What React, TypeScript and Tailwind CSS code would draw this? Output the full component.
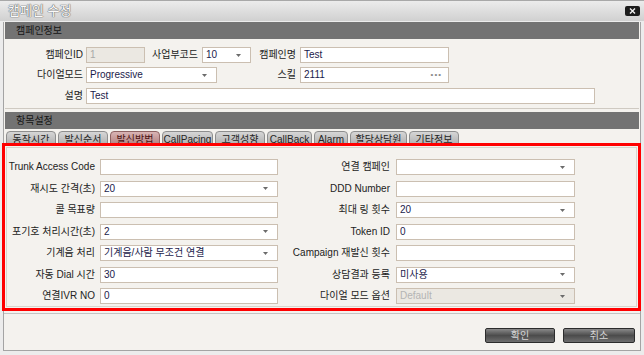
import React from 'react';

/**
 * CampaignEditDialog
 * ==================
 * 캠페인 수정 popup — campaign info form + 발신방법 tab.
 */

const TABS = ['동작시간', '발신순서', '발신방법', 'CallPacing', '고객성향', 'CallBack', 'Alarm', '할당상담원', '기타정보'];
const TAB_WIDTHS = ['w-[50px]', 'w-[50px]', 'w-[50px]', 'w-[51px]', 'w-[50px]', 'w-[45px]', 'w-[34px]', 'w-[57px]', 'w-[50px]'];

function Arrow() {
  return (
    <svg width="5" height="3" viewBox="0 0 5 3" className="shrink-0">
      <path d="M0 0h5L2.5 3z" fill="#6b6b6b" />
    </svg>
  );
}

function Input({ value, w, disabled, dots }: { value?: string; w: string; disabled?: boolean; dots?: boolean }) {
  return (
    <div
      className={`${w} h-[16px] flex items-center justify-between border border-[#cbbfb1] pl-[3px] pr-[6px] leading-[14px] ${
        disabled ? 'bg-[#ebe8e2] text-[#a8a8a8]' : 'bg-white text-[#1b1b4b]'
      }`}
    >
      <span>{value}</span>
      {dots && <span className="text-[#8a8a8a] text-[8px] tracking-[1px]">•••</span>}
    </div>
  );
}

function Select({ value, w, disabled }: { value?: string; w: string; disabled?: boolean }) {
  return (
    <div
      className={`${w} h-[16px] flex items-center justify-between border border-[#cbbfb1] pl-[3px] pr-[9px] leading-[14px] ${
        disabled ? 'bg-[#ebe8e2] text-[#b4b4b4]' : 'bg-white text-[#1b1b4b]'
      }`}
    >
      <span>{value}</span>
      <Arrow />
    </div>
  );
}

function Label({ text, w }: { text: string; w: string }) {
  return <div className={`${w} text-right text-[#222] leading-[14px] whitespace-nowrap`}>{text}</div>;
}

function SectionHeader({ title }: { title: string }) {
  return (
    <div className="h-[17px] mx-[1px] bg-[#737373] flex items-center pl-[11px] text-[#151515] text-[10px] leading-[14px]">
      {title}
    </div>
  );
}

type Cell = { label: string; kind: 'input' | 'select'; value?: string; disabled?: boolean };

const ROWS: [Cell, Cell][] = [
  [{ label: 'Trunk Access Code', kind: 'input' }, { label: '연결 캠페인', kind: 'select' }],
  [{ label: '재시도 간격(초)', kind: 'select', value: '20' }, { label: 'DDD Number', kind: 'input' }],
  [{ label: '콜 목표량', kind: 'input' }, { label: '최대 링 횟수', kind: 'select', value: '20' }],
  [{ label: '포기호 처리시간(초)', kind: 'select', value: '2' }, { label: 'Token ID', kind: 'input', value: '0' }],
  [{ label: '기계음 처리', kind: 'select', value: '기계음/사람 무조건 연결' }, { label: 'Campaign 재발신 횟수', kind: 'input' }],
  [{ label: '자동 Dial 시간', kind: 'input', value: '30' }, { label: '상담결과 등록', kind: 'select', value: '미사용' }],
  [{ label: '연결IVR NO', kind: 'input', value: '0' }, { label: '다이얼 모드 옵션', kind: 'select', value: 'Default', disabled: true }],
];

function Control({ cell, w }: { cell: Cell; w: string }) {
  return cell.kind === 'select' ? (
    <Select value={cell.value} w={w} disabled={cell.disabled} />
  ) : (
    <Input value={cell.value} w={w} disabled={cell.disabled} />
  );
}

function DarkButton({ text, w }: { text: string; w: string }) {
  return (
    <button
      className={`${w} h-[15px] rounded-[2px] border border-[#2c2c2c] bg-gradient-to-b from-[#8a8a8a] via-[#4c4c4c] to-[#6e6e6e] text-[#d8d8d8] text-[10px] leading-[13px]`}
    >
      {text}
    </button>
  );
}

export default function App() {
  return (
    <div className="w-[644px] h-[355px] overflow-hidden bg-[#ececec] text-[10px] font-['Liberation_Sans','Noto_Sans_CJK_KR',sans-serif]">
      {/* Title bar */}
      <div className="h-[21px] border-t border-[#a8a8a8] bg-gradient-to-b from-[#ececec] via-[#dedede] to-[#d0d0d0] flex items-center justify-between pl-[8px] pr-[4px]">
        <span className="text-[13px] leading-[16px] text-[#fafafa] [text-shadow:0_0_1px_#6a6a6a,0_0_1px_#6a6a6a,0_0_1px_#6a6a6a]">
          캠페인 수정
        </span>
        <div className="w-[15px] h-[10px] rounded-[2px] bg-[#1c1c1c] flex items-center justify-center">
          <svg width="7" height="6" viewBox="0 0 7 6">
            <path d="M1 0.5l5 5M6 0.5l-5 5" stroke="#f2f2f2" strokeWidth="1.4" />
          </svg>
        </div>
      </div>

      {/* Body */}
      <div className="mt-[1px] mx-[3px] border-x border-b border-[#a4a4a4] bg-[#f4f2ee] h-[329px]">
        <SectionHeader title="캠페인정보" />

        <div className="mx-[1px] pt-[8px] pb-[4px] border-b border-[#cfcac2] flex flex-col gap-[4px]">
          <div className="flex items-center">
            <Label text="캠페인ID" w="w-[78px]" />
            <div className="ml-[3px]">
              <Input value="1" w="w-[59px]" disabled />
            </div>
            <Label text="사업부코드" w="w-[53px]" />
            <div className="ml-[4px]">
              <Select value="10" w="w-[49px]" />
            </div>
            <Label text="캠페인명" w="w-[45px]" />
            <div className="ml-[4px]">
              <Input value="Test" w="w-[149px]" />
            </div>
          </div>
          <div className="flex items-center">
            <Label text="다이얼모드" w="w-[78px]" />
            <div className="ml-[3px]">
              <Select value="Progressive" w="w-[131px]" />
            </div>
            <Label text="스킬" w="w-[79px]" />
            <div className="ml-[4px]">
              <Input value="2111" w="w-[149px]" dots />
            </div>
          </div>
          <div className="flex items-center mt-[1px]">
            <Label text="설명" w="w-[78px]" />
            <div className="ml-[3px]">
              <Input value="Test" w="w-[509px]" />
            </div>
          </div>
        </div>

        <div className="mt-[3px]">
          <SectionHeader title="항목설정" />
        </div>

        {/* Tabs */}
        <div className="h-[14px] overflow-hidden flex items-start gap-[2px] pl-[2px] pt-[2px]">
          {TABS.map((t, i) => {
            const active = t === '발신방법';
            return (
              <div
                key={t}
                className={`${TAB_WIDTHS[i]} h-[18px] shrink-0 rounded-t-[4px] border text-center leading-[15px] whitespace-nowrap ${
                  active
                    ? 'border-[#8e6262] bg-gradient-to-b from-[#d9b4b4] to-[#a87474] text-[#4a1212]'
                    : 'border-[#8e8e8e] bg-gradient-to-b from-[#d6d6d6] to-[#a6a6a6] text-[#262626]'
                }`}
              >
                {t}
              </div>
            );
          })}
        </div>

        {/* 발신방법 panel (highlighted) */}
        <div className="-ml-[2px] -mr-[1px] border-[3px] border-[#ff0000] p-[1px]">
          <div className="border border-[#d8d4cc] pt-[11px] pb-[2px] flex flex-col gap-[5.5px]">
            {ROWS.map(([l, r]) => (
              <div key={l.label} className="flex items-center h-[16px]">
                <Label text={l.label} w="w-[88px]" />
                <div className="ml-[5px]">
                  <Control cell={l} w="w-[178px]" />
                </div>
                <Label text={r.label} w="w-[112px]" />
                <div className="ml-[6px]">
                  <Control cell={r} w="w-[179px]" />
                </div>
              </div>
            ))}
          </div>
        </div>

        {/* Buttons */}
        <div className="mt-[2px] border-t border-[#c4c4c4] pt-[14px] flex justify-end gap-[8px] pr-[5px]">
          <DarkButton text="확인" w="w-[70px]" />
          <DarkButton text="취소" w="w-[72px]" />
        </div>
      </div>
    </div>
  );
}
